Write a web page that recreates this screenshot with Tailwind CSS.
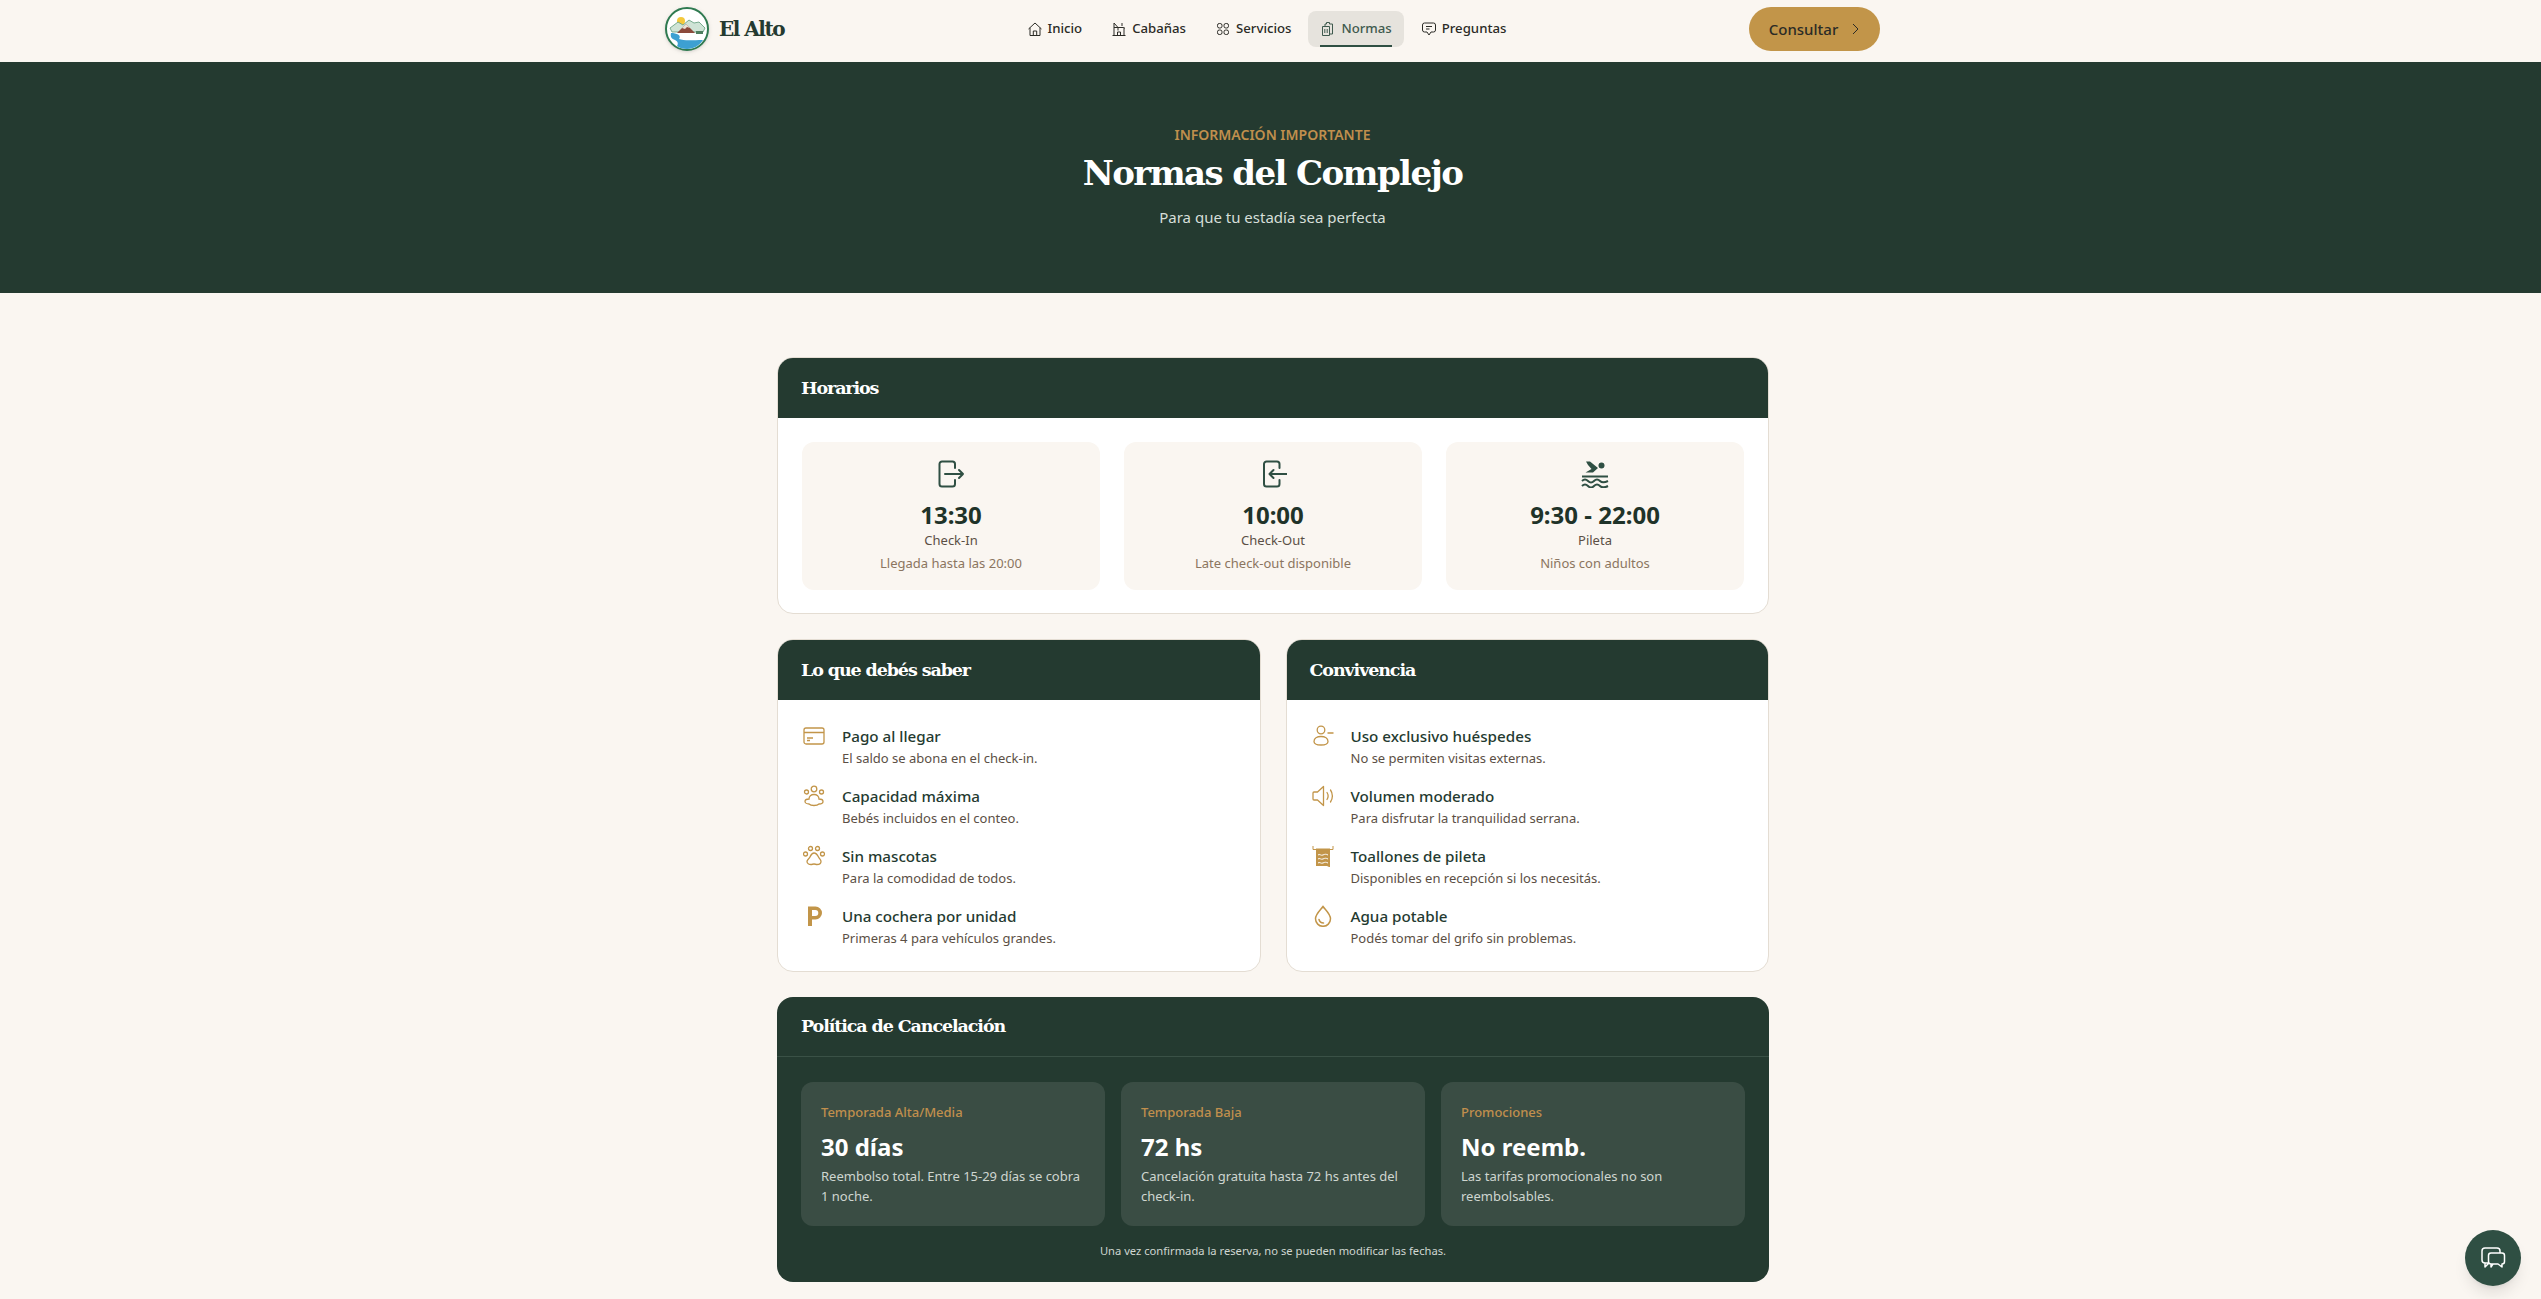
<!DOCTYPE html>
<html lang="es">
<head>
    <meta charset="UTF-8">
    <meta name="viewport" content="width=device-width, initial-scale=1.0">
    <title>El Alto - Normas</title>
    <script src="https://cdn.jsdelivr.net/npm/@tailwindcss/browser@4"></script>
</head>
<body class="bg-[#faf6f1] font-['Noto_Sans',sans-serif] text-[#243a30] h-[1299px] overflow-hidden">
    <!-- Navbar -->
    <header class="h-[62px] pb-1 bg-[#faf6f1]">
        <div class="ml-[665px] w-[1215px] h-full flex items-center justify-between">
            <div class="flex items-center gap-2.5 w-[119px]">
                <svg class="w-11 h-11 shrink-0 drop-shadow" viewBox="0 0 44 44">
                    <circle cx="22" cy="22" r="21" fill="#fff" stroke="#2f7a50" stroke-width="2"/>
                    <circle cx="16" cy="14" r="4" fill="#f4c93c"/>
                    <path d="M5 21l8-6 5 3 6-5 5 3 5-1 6 6-2 4H7z" fill="#cfe3d6" stroke="#5d9a78" stroke-width=".8"/>
                    <path d="M12 26l9-9 9 9z" fill="#8c4a3c"/>
                    <path d="M17 21l4-4 4 4-3-1-2 2z" fill="#e9e2d5"/>
                    <path d="M31 24h7v3h-7z" fill="#4d7d5e"/>
                    <path d="M8 26c6 1 8 3 6 6 5 2 14 1 24 1-3 5-9 9-16 9-4 0-8-1-10-3 2-3 0-5-2-6-3-1-5-3-4-7z" fill="#3da0d2"/>
                </svg>
                <span class="font-['DejaVu_Serif',serif] font-bold text-[20px] tracking-[-1.5px] text-[#243a30] whitespace-nowrap">El Alto</span>
            </div>

            <nav class="flex items-center gap-[5px] text-[13.2px] font-medium text-[#2b2b26]">
                <a class="h-9 px-3 flex items-center gap-[5px]">
                    <svg class="w-4 h-4" viewBox="0 0 16 16" fill="none" stroke="currentColor"><path d="M1.5 8 8 2l6.5 6M3 6.800v7.700h10V6.800M6.300 14.500V10h3.400v4.500"/></svg>
                    Inicio
                </a>
                <a class="h-9 px-3 flex items-center gap-[5px]">
                    <svg class="w-4 h-4" viewBox="0 0 16 16" fill="none" stroke="currentColor"><path d="M1.500 14.500h13M3 14.500V2l4 4.500h5.500l1 1M13 6v8.500M3 6.500h4M7 6.500v3M6.500 14.500v-3.500h3v3.500M11 2v3"/></svg>
                    Cabañas
                </a>
                <a class="h-9 px-3 flex items-center gap-[5px]">
                    <svg class="w-4 h-4" viewBox="0 0 16 16" fill="none" stroke="currentColor"><rect x="2.500" y="2.500" width="4.500" height="4.500" rx="1.800"/><rect x="9" y="2.500" width="4.500" height="4.500" rx="1.800"/><rect x="2.500" y="9" width="4.500" height="4.500" rx="1.800"/><rect x="9" y="9" width="4.500" height="4.500" rx="1.800"/></svg>
                    Servicios
                </a>
                <a class="relative h-9 px-3 flex items-center gap-[5px] rounded-lg bg-[#e6e3dd] text-[#3f5a4e]">
                    <svg class="w-4 h-4" viewBox="0 0 16 16" fill="none" stroke="currentColor"><path d="M2.500 5.500h7v9h-7zM5 5.500V3h1.500V1.500h3V3h3v10h-3M4.800 8v4M7.200 8v4"/></svg>
                    Normas
                    <span class="absolute left-3 right-3 bottom-0 h-[2px] bg-[#2f4f43]"></span>
                </a>
                <a class="h-9 px-3 flex items-center gap-[5px]">
                    <svg class="w-4 h-4" viewBox="0 0 16 16" fill="none" stroke="currentColor"><path d="M3.500 2h9a2 2 0 0 1 2 2v5a2 2 0 0 1-2 2H10l-2 3-2-3H3.500a2 2 0 0 1-2-2V4a2 2 0 0 1 2-2zM5 5.500h6M5 8h3.500"/></svg>
                    Preguntas
                </a>
            </nav>

            <button class="w-[131px] h-11 pl-[2px] rounded-full bg-[#c29549] text-[#2b2b26] text-[15px] font-medium flex items-center justify-center gap-2.5">
                Consultar
                <svg class="w-3.5 h-3.5" viewBox="0 0 14 14" fill="none" stroke="currentColor"><path d="M5 2l5 5-5 5"/></svg>
            </button>
        </div>
    </header>

    <!-- Hero -->
    <section class="h-[231px] bg-[#243a30] pt-[63px] pl-1 text-center">
        <p class="text-[14px] leading-5 font-semibold text-[#c08f4d]">INFORMACIÓN IMPORTANTE</p>
        <h1 class="mt-[6px] font-['DejaVu_Serif',serif] font-bold text-[34px] leading-[44px] tracking-[-1.6px] text-white">Normas del Complejo</h1>
        <p class="mt-[10px] text-[15px] leading-6 text-[#d6dfd9]">Para que tu estadía sea perfecta</p>
    </section>

    <main class="ml-[777px] w-[992px] pt-[64px]">
        <!-- Horarios -->
        <section class="rounded-2xl border border-[#e4ddd3] bg-white overflow-hidden">
            <h2 class="h-[60px] px-[23px] flex items-center bg-[#243a30] font-['DejaVu_Serif',serif] font-bold text-[17.5px] tracking-[-1.1px] text-white">Horarios</h2>
            <div class="p-6 pb-[23px] grid grid-cols-3 gap-6">
                <div class="h-[148px] rounded-xl bg-[#faf6f1] pt-[18px] flex flex-col items-center">
                    <svg class="w-7 h-7 text-[#2f4f43]" viewBox="0 0 28 28" fill="none" stroke="currentColor" stroke-width="2" stroke-linecap="round" stroke-linejoin="round"><path d="M18 8V4a2.500 2.500 0 0 0-2.500-2.500H5A2.500 2.500 0 0 0 2.500 4v20A2.500 2.500 0 0 0 5 26.500h10.500A2.500 2.500 0 0 0 18 24v-4M8 14h18M22 10l4 4-4 4"/></svg>
                    <p class="mt-[11px] text-[24px] leading-8 font-bold text-[#1f3329]">13:30</p>
                    <p class="text-[13px] leading-[18px] text-[#5b4f45]">Check-In</p>
                    <p class="mt-[5px] text-[13px] leading-[18px] text-[#8b7560]">Llegada hasta las 20:00</p>
                </div>
                <div class="h-[148px] rounded-xl bg-[#faf6f1] pt-[18px] flex flex-col items-center">
                    <svg class="w-7 h-7 text-[#2f4f43]" viewBox="0 0 28 28" fill="none" stroke="currentColor" stroke-width="2" stroke-linecap="round" stroke-linejoin="round"><path d="M20.500 8V4A2.500 2.500 0 0 0 18 1.500H7.500A2.500 2.500 0 0 0 5 4v20a2.500 2.500 0 0 0 2.500 2.500H18a2.500 2.500 0 0 0 2.500-2.500v-4M27.500 14h-17M14.500 10l-4 4 4 4"/></svg>
                    <p class="mt-[11px] text-[24px] leading-8 font-bold text-[#1f3329]">10:00</p>
                    <p class="text-[13px] leading-[18px] text-[#5b4f45]">Check-Out</p>
                    <p class="mt-[5px] text-[13px] leading-[18px] text-[#8b7560]">Late check-out disponible</p>
                </div>
                <div class="h-[148px] rounded-xl bg-[#faf6f1] pt-[18px] flex flex-col items-center">
                    <svg class="w-7 h-7 text-[#2f4f43]" viewBox="0 0 28 28" fill="none" stroke="currentColor" stroke-width="2"><path d="M5 1.500h4l8 6.500-5 4.500H4.500l6-3.500L7 5z" fill="currentColor" stroke="none"/><circle cx="20.500" cy="5.500" r="3" fill="currentColor" stroke="none"/><path d="M1 16.500h26M1 21c2-2 4-2 6 0s4 2 6 0 4-2 6 0 4 2 8 0M1 26c2-2 4-2 6 0s4 2 6 0 4-2 6 0 4 2 8 0"/></svg>
                    <p class="mt-[11px] text-[24px] leading-8 font-bold text-[#1f3329]">9:30 - 22:00</p>
                    <p class="text-[13px] leading-[18px] text-[#5b4f45]">Pileta</p>
                    <p class="mt-[5px] text-[13px] leading-[18px] text-[#8b7560]">Niños con adultos</p>
                </div>
            </div>
        </section>

        <div class="mt-[25px] grid grid-cols-2 gap-[25px]">
            <!-- Lo que debes saber -->
            <section class="h-[333px] rounded-2xl border border-[#e4ddd3] bg-white overflow-hidden">
                <h2 class="h-[60px] px-[23px] flex items-center bg-[#243a30] font-['DejaVu_Serif',serif] font-bold text-[17.5px] tracking-[-1.1px] text-white">Lo que debés saber</h2>
                <ul class="pl-[25px] pt-[23px] flex flex-col gap-3">
                    <li class="h-12 flex gap-[17px]">
                        <svg class="w-[22px] h-[22px] mt-[2px] shrink-0 text-[#c29549]" viewBox="0 0 22 22" fill="none" stroke="currentColor" stroke-width="1.300"><rect x="1" y="3" width="20" height="16" rx="2"/><path d="M1 7.500h20M4 13h6M4 15.500h3"/></svg>
                        <div>
                            <p class="text-[15.2px] leading-[26px] font-medium text-[#243a30]">Pago al llegar</p>
                            <p class="text-[13px] leading-[18px] text-[#5b4f45]">El saldo se abona en el check-in.</p>
                        </div>
                    </li>
                    <li class="h-12 flex gap-[17px]">
                        <svg class="w-[22px] h-[22px] mt-[2px] shrink-0 text-[#c29549]" viewBox="0 0 22 22" fill="none" stroke="currentColor" stroke-width="1.300"><circle cx="11" cy="4" r="2.800"/><circle cx="3.500" cy="7" r="2"/><circle cx="18.500" cy="7" r="2"/><path d="M11 9.500c3 0 5 2 5 4.500 2 0 4 1 4 2.500S18 19 16 19c-1 1-3 1.500-5 1.500S7 20 6 19c-2 0-4-1-4-2.500S4 14 6 14c0-2.500 2-4.500 5-4.500z"/></svg>
                        <div>
                            <p class="text-[15.2px] leading-[26px] font-medium text-[#243a30]">Capacidad máxima</p>
                            <p class="text-[13px] leading-[18px] text-[#5b4f45]">Bebés incluidos en el conteo.</p>
                        </div>
                    </li>
                    <li class="h-12 flex gap-[17px]">
                        <svg class="w-[22px] h-[22px] mt-[2px] shrink-0 text-[#c29549]" viewBox="0 0 22 22" fill="none" stroke="currentColor" stroke-width="1.300"><circle cx="7.500" cy="3.500" r="2"/><circle cx="14.500" cy="3.500" r="2"/><circle cx="2.500" cy="9" r="2"/><circle cx="19.500" cy="9" r="2"/><path d="M11 8c2.500 0 3.500 2 4.500 4s2.500 2.500 2.500 4.500-2 3-4 3c-1 0-2-.5-3-.5s-2 .5-3 .5c-2 0-4-1-4-3S6 14 7 12 8.500 8 11 8z"/></svg>
                        <div>
                            <p class="text-[15.2px] leading-[26px] font-medium text-[#243a30]">Sin mascotas</p>
                            <p class="text-[13px] leading-[18px] text-[#5b4f45]">Para la comodidad de todos.</p>
                        </div>
                    </li>
                    <li class="h-12 flex gap-[17px]">
                        <svg class="w-[22px] h-[22px] mt-[2px] shrink-0 text-[#c29549]" viewBox="0 0 22 22" fill="currentColor"><path fill-rule="evenodd" d="M5 1.500h7.500a6.500 6.500 0 0 1 0 13H9v6.500H5zM9 5v6h3.300a3 3 0 0 0 0-6z"/></svg>
                        <div>
                            <p class="text-[15.2px] leading-[26px] font-medium text-[#243a30]">Una cochera por unidad</p>
                            <p class="text-[13px] leading-[18px] text-[#5b4f45]">Primeras 4 para vehículos grandes.</p>
                        </div>
                    </li>
                </ul>
            </section>

            <!-- Convivencia -->
            <section class="h-[333px] rounded-2xl border border-[#e4ddd3] bg-white overflow-hidden">
                <h2 class="h-[60px] px-[23px] flex items-center bg-[#243a30] font-['DejaVu_Serif',serif] font-bold text-[17.5px] tracking-[-1.1px] text-white">Convivencia</h2>
                <ul class="pl-[25px] pt-[23px] flex flex-col gap-3">
                    <li class="h-12 flex gap-[17px]">
                        <svg class="w-[22px] h-[22px] mt-[2px] shrink-0 text-[#c29549]" viewBox="0 0 22 22" fill="none" stroke="currentColor" stroke-width="1.300"><circle cx="9" cy="5" r="3.800"/><path d="M9 11.500c-4 0-7 2-7 5 0 2 2 3.500 7 3.500s7-1.500 7-3.500c0-3-3-5-7-5zM15.500 8h6"/></svg>
                        <div>
                            <p class="text-[15.2px] leading-[26px] font-medium text-[#243a30]">Uso exclusivo huéspedes</p>
                            <p class="text-[13px] leading-[18px] text-[#5b4f45]">No se permiten visitas externas.</p>
                        </div>
                    </li>
                    <li class="h-12 flex gap-[17px]">
                        <svg class="w-[22px] h-[22px] mt-[2px] shrink-0 text-[#c29549]" viewBox="0 0 22 22" fill="none" stroke="currentColor" stroke-width="1.300" stroke-linejoin="round" stroke-linecap="round"><path d="M11.500 1.500v19L5.500 15H2a1 1 0 0 1-1-1V8a1 1 0 0 1 1-1h3.500zM15 7.500c1.300 2 1.300 5 0 7M18.500 5c2.500 3.500 2.500 8.500 0 12"/></svg>
                        <div>
                            <p class="text-[15.2px] leading-[26px] font-medium text-[#243a30]">Volumen moderado</p>
                            <p class="text-[13px] leading-[18px] text-[#5b4f45]">Para disfrutar la tranquilidad serrana.</p>
                        </div>
                    </li>
                    <li class="h-12 flex gap-[17px]">
                        <svg class="w-[22px] h-[22px] mt-[2px] shrink-0 text-[#c29549]" viewBox="0 0 22 22" fill="none" stroke="currentColor"><path d="M1 1v3.500h3M21 1v3.500h-3" stroke-width="1"/><path d="M4 3.500h14v19l-3-1.500H4z" fill="currentColor" stroke="none"/><path d="M6 10c1.500-1.500 3 1 5 0s3-1 5 0M6 14c1.500-1.500 3 1 5 0s3-1 5 0M6 18c1.500-1.500 3 1 5 0s3-1 5 0" stroke="#fff" stroke-width="1"/></svg>
                        <div>
                            <p class="text-[15.2px] leading-[26px] font-medium text-[#243a30]">Toallones de pileta</p>
                            <p class="text-[13px] leading-[18px] text-[#5b4f45]">Disponibles en recepción si los necesitás.</p>
                        </div>
                    </li>
                    <li class="h-12 flex gap-[17px]">
                        <svg class="w-[22px] h-[22px] mt-[2px] shrink-0 text-[#c29549]" viewBox="0 0 22 22" fill="none" stroke="currentColor" stroke-width="1.500" stroke-linecap="round"><path d="M11 1.500c2 3 7.500 7.500 7.500 12.300a7.500 7.500 0 0 1-15 0C3.500 9 9 4.500 11 1.500z"/><path d="M7 14.500c.5 2 2.500 3.500 4.500 3.500"/></svg>
                        <div>
                            <p class="text-[15.2px] leading-[26px] font-medium text-[#243a30]">Agua potable</p>
                            <p class="text-[13px] leading-[18px] text-[#5b4f45]">Podés tomar del grifo sin problemas.</p>
                        </div>
                    </li>
                </ul>
            </section>
        </div>

        <!-- Politica de cancelacion -->
        <section class="mt-[25px] h-[285px] rounded-2xl bg-[#243a30]">
            <h2 class="h-[60px] px-6 flex items-center border-b border-[#3a5146] font-['DejaVu_Serif',serif] font-bold text-[17.5px] tracking-[-1.1px] text-white">Política de Cancelación</h2>
            <div class="px-6 pt-[25px] grid grid-cols-3 gap-4">
                <div class="h-[144px] rounded-xl bg-[#3a4d44] px-5 pt-5">
                    <p class="text-[13px] leading-5 font-medium text-[#c08f4d]">Temporada Alta/Media</p>
                    <p class="mt-[9px] text-[24px] leading-8 font-bold text-white">30 días</p>
                    <p class="mt-[3px] text-[13px] leading-5 text-[#cfd6d0]">Reembolso total. Entre 15-29 días se cobra 1 noche.</p>
                </div>
                <div class="h-[144px] rounded-xl bg-[#3a4d44] px-5 pt-5">
                    <p class="text-[13px] leading-5 font-medium text-[#c08f4d]">Temporada Baja</p>
                    <p class="mt-[9px] text-[24px] leading-8 font-bold text-white">72 hs</p>
                    <p class="mt-[3px] text-[13px] leading-5 text-[#cfd6d0]">Cancelación gratuita hasta 72 hs antes del check-in.</p>
                </div>
                <div class="h-[144px] rounded-xl bg-[#3a4d44] px-5 pt-5">
                    <p class="text-[13px] leading-5 font-medium text-[#c08f4d]">Promociones</p>
                    <p class="mt-[9px] text-[24px] leading-8 font-bold text-white">No reemb.</p>
                    <p class="mt-[3px] text-[13px] leading-5 text-[#cfd6d0]">Las tarifas promocionales no son reembolsables.</p>
                </div>
            </div>
            <p class="mt-4 text-center text-[11.2px] leading-[18px] text-[#cfd6d0]">Una vez confirmada la reserva, no se pueden modificar las fechas.</p>
        </section>
    </main>

    <!-- Chat -->
    <button class="fixed right-5 bottom-[13px] w-14 h-14 rounded-full bg-[#2f4f43] shadow-lg flex items-center justify-center text-white">
        <svg class="w-7 h-7" viewBox="0 0 28 28" fill="none" stroke="currentColor" stroke-width="1.500" stroke-linejoin="round"><path d="M9 19H6a3 3 0 0 1-3-3V7a3 3 0 0 1 3-3h12a3 3 0 0 1 3 3v2M6 19v4l4-4"/><path d="M12 9h11a2.500 2.500 0 0 1 2.500 2.500v6A2.500 2.500 0 0 1 23 20v3l-4-3h-7a2.500 2.500 0 0 1-2.500-2.500v-6A2.500 2.500 0 0 1 12 9zM14 20l-2 3v-3"/></svg>
    </button>
</body>
</html>
